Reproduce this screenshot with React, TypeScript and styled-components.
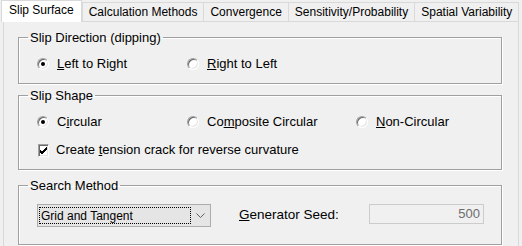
import type { ReactNode } from "react"
import styled, { createGlobalStyle } from "styled-components"

const GlobalStyle = createGlobalStyle`
    html, body {
        margin: 0;
        padding: 0;
        background: #f0f0f0;
    }
    body {
        font-family: "Liberation Sans", Arial, sans-serif;
        font-size: 13px;
        color: #000;
    }
`

const tabs = ["Slip Surface", "Calculation Methods", "Convergence", "Sensitivity/Probability", "Spatial Variability"]

const Radio = ({ checked, children }: { checked?: boolean; children: ReactNode }) => (
    <Option>
        <RadioCircle $checked={checked} />
        <span>{children}</span>
    </Option>
)

export default function App() {
    return (
        <Window>
            <GlobalStyle />
            <TabStrip>
                {tabs.map((t, i) => (
                    <Tab key={t} $active={i === 0}>{t}</Tab>
                ))}
            </TabStrip>
            <Panel>
                <Group>
                    <Legend>Slip Direction (dipping)</Legend>
                    <GroupBody>
                        <OptionRow>
                            <Radio checked><u>L</u>eft to Right</Radio>
                            <Radio><u>R</u>ight to Left</Radio>
                        </OptionRow>
                    </GroupBody>
                </Group>

                <Group $gap={4}>
                    <Legend>Slip Shape</Legend>
                    <GroupBody>
                        <OptionRow>
                            <Radio checked>C<u>i</u>rcular</Radio>
                            <Radio>Co<u>m</u>posite Circular</Radio>
                            <Radio><u>N</u>on-Circular</Radio>
                        </OptionRow>
                        <OptionRow $gap={12}>
                            <Option>
                                <CheckBox>
                                    <svg width="9" height="9" viewBox="0 0 9 9">
                                        <path d="M1 4 L3 6 L8 1 M1 5 L3 7 L8 2 M1 6 L3 8 L8 3" stroke="#000" strokeWidth="1" fill="none" />
                                    </svg>
                                </CheckBox>
                                <span>Create <u>t</u>ension crack for reverse curvature</span>
                            </Option>
                        </OptionRow>
                    </GroupBody>
                </Group>

                <Group $gap={8}>
                    <Legend>Search Method</Legend>
                    <GroupBody $bottom={17}>
                        <SearchRow>
                            <Select>
                                <SelectValue>Grid and Tangent</SelectValue>
                                <Chevron>
                                    <svg width="9" height="5" viewBox="0 0 9 5">
                                        <path d="M0.5 0.5 L4.5 4.5 L8.5 0.5" stroke="#606060" strokeWidth="1" fill="none" />
                                    </svg>
                                </Chevron>
                            </Select>
                            <SeedLabel><u>G</u>enerator Seed:</SeedLabel>
                            <SeedInput>500</SeedInput>
                        </SearchRow>
                    </GroupBody>
                </Group>
            </Panel>
        </Window>
    )
}

const Window = styled.div`
    width: 522px;
    height: 246px;
    overflow: hidden;
    background: #f0f0f0;
`

const TabStrip = styled.div`
    display: flex;
    align-items: flex-end;
    height: 21px;
    padding-left: 1px;
    position: relative;
    z-index: 1;
`

const Tab = styled.div<{ $active?: boolean }>`
    box-sizing: border-box;
    height: ${({ $active }) => ($active ? 22 : 19)}px;
    margin-bottom: ${({ $active }) => ($active ? -1 : 0)}px;
    margin-left: ${({ $active }) => ($active ? 0 : -1)}px;
    padding: 0 ${({ $active }) => ($active ? 7 : 6)}px ${({ $active }) => ($active ? 3 : 0)}px;
    display: flex;
    align-items: center;
    font-size: 12px;
    white-space: nowrap;
    background: ${({ $active }) => ($active ? "#fff" : "#f0f0f0")};
    border: 1px solid #d9d9d9;
    border-bottom: none;
    ${({ $active }) => ($active ? "z-index: 2; margin-right: 1px;" : "")}
`

const Panel = styled.div`
    margin: 0 3px 0 3px;
    height: 225px;
    border: 1px solid #d9d9d9;
    border-bottom: none;
    padding: 8px 16px 0 14px;
`

const Group = styled.fieldset<{ $gap?: number }>`
    margin: ${({ $gap }) => $gap ?? 0}px 0 0;
    padding: 0;
    min-width: 0;
    border: 1px solid #a0a0a0;
    box-shadow: inset 1px 1px 0 #fff, 1px 1px 0 #fff;
`

const Legend = styled.legend`
    margin-left: 9px;
    padding: 0 2px;
    font-size: 13px;
    line-height: 15px;
`

const GroupBody = styled.div<{ $bottom?: number }>`
    padding: 11px 17px ${({ $bottom }) => $bottom ?? 11}px 18px;
`

const OptionRow = styled.div<{ $gap?: number }>`
    display: grid;
    grid-template-columns: 150px 169px auto;
    height: 16px;
    align-items: center;
    margin-top: ${({ $gap }) => $gap ?? 0}px;
`

const Option = styled.label`
    display: flex;
    align-items: center;
    gap: 8px;
    white-space: nowrap;
    line-height: 16px;
`

const RadioCircle = styled.span<{ $checked?: boolean }>`
    width: 12px;
    height: 12px;
    box-sizing: border-box;
    border-radius: 50%;
    border: 1px solid;
    border-color: #a0a0a0 #fff #fff #a0a0a0;
    box-shadow: inset 1px 1px 0 #696969, inset -1px -1px 0 #e3e3e3;
    background: #fff;
    display: flex;
    align-items: center;
    justify-content: center;

    &::after {
        content: '';
        width: 4px;
        height: 4px;
        border-radius: 50%;
        background: ${({ $checked }) => ($checked ? "#000" : "transparent")};
    }
`

const CheckBox = styled.span`
    width: 13px;
    height: 13px;
    margin-left: 1px;
    margin-right: -1px;
    box-sizing: border-box;
    border: 1px solid;
    border-color: #a0a0a0 #fff #fff #a0a0a0;
    box-shadow: inset 1px 1px 0 #696969, inset -1px -1px 0 #e3e3e3;
    background: #fff;
    display: flex;
    align-items: center;
    justify-content: center;
`

const SearchRow = styled.div`
    display: flex;
    align-items: flex-start;
`

const Select = styled.div`
    width: 174px;
    height: 23px;
    box-sizing: border-box;
    border: 1px solid #acacac;
    background: #e5e5e5;
    padding: 2px 0 2px 1px;
    display: flex;
`

const SelectValue = styled.div`
    flex: 1;
    box-sizing: border-box;
    border: 1px dotted #000;
    display: flex;
    align-items: center;
    padding-left: 1px;
    font-size: 12px;
`

const Chevron = styled.div`
    width: 19px;
    display: flex;
    align-items: center;
    justify-content: center;
`

const SeedLabel = styled.span`
    flex: 1;
    margin-left: 28px;
    font-size: 13.5px;
    line-height: 22px;
    white-space: nowrap;
`

const SeedInput = styled.div`
    width: 115px;
    height: 20px;
    box-sizing: border-box;
    border: 1px solid #cccccc;
    background: #f0f0f0;
    color: #6d6d6d;
    font-size: 13px;
    line-height: 18px;
    text-align: right;
    padding-right: 3px;
`
